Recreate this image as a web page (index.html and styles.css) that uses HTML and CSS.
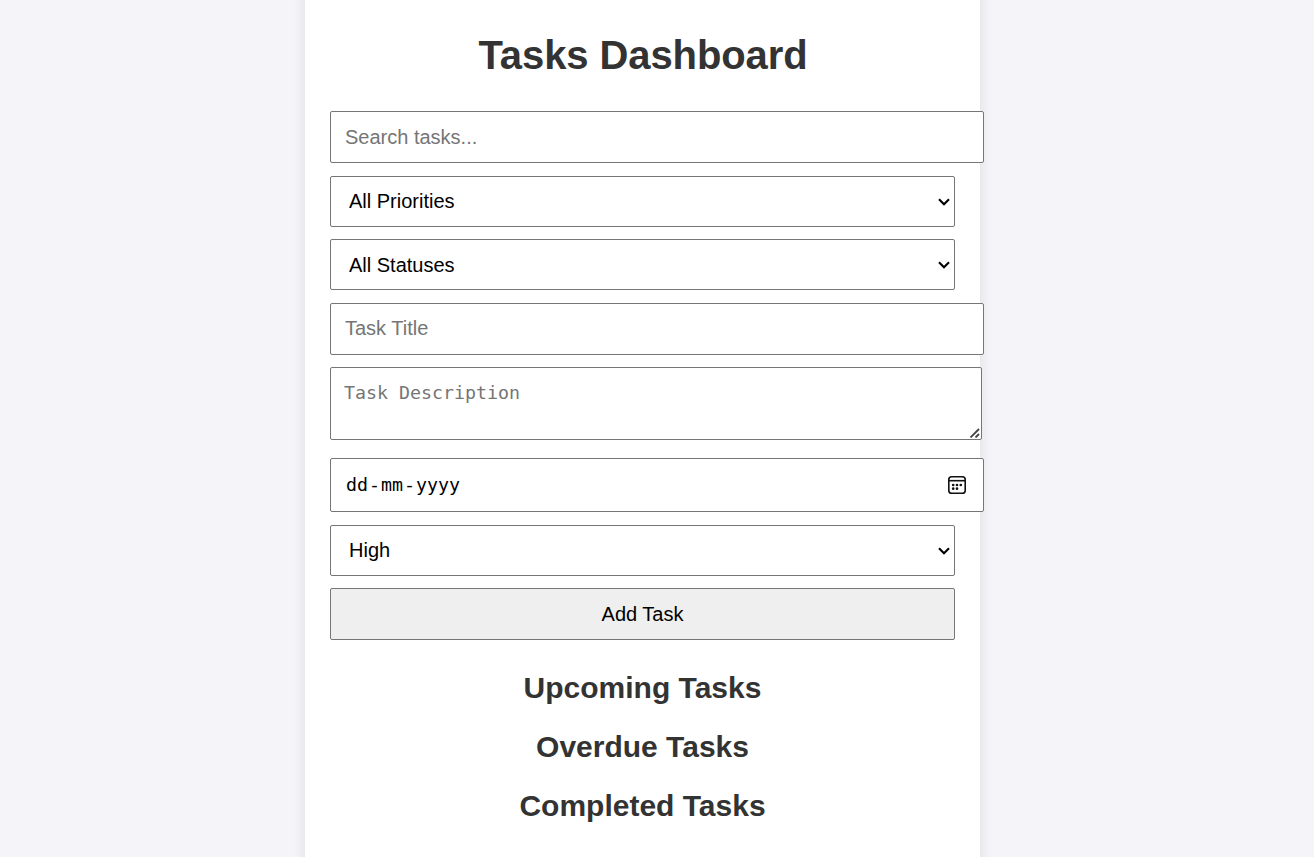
FILE: index.html
```html
<!DOCTYPE html>
<html lang="en">
<head>
<meta charset="utf-8">
<title>Tasks Dashboard</title>
<link rel="stylesheet" href="styles.css">
</head>
<body>
<main class="dashboard">
  <h1 class="title">Tasks Dashboard</h1>
  <form class="form">
    <input class="field text-input" type="text" placeholder="Search tasks...">
    <div class="select-wrap">
      <select class="field select raised"><option>All Priorities</option></select>
      <svg class="chevron" viewBox="0 0 12 8"><path d="M1 1.2 6 6.2 11 1.2"/></svg>
    </div>
    <div class="select-wrap">
      <select class="field select"><option>All Statuses</option></select>
      <svg class="chevron" viewBox="0 0 12 8"><path d="M1 1.2 6 6.2 11 1.2"/></svg>
    </div>
    <input class="field text-input task-title" type="text" placeholder="Task Title">
    <div class="description-wrap">
      <textarea class="field description" placeholder="Task Description"></textarea>
      <svg class="grip" viewBox="0 0 10 10"><path d="M.5 9.5 9 1M5.5 9.5 9 6"/></svg>
    </div>
    <div class="field date">
      <span class="date-text"><span class="part">dd</span>-<span class="part">mm</span>-<span class="part">yyyy</span></span>
      <svg class="calendar" viewBox="0 0 18 18">
        <rect x=".8" y=".8" width="16.4" height="16.4" rx="2.8"/>
        <path d="M1 4.7h16"/>
        <g class="dots"><circle cx="5.2" cy="9" r="1.35"/><circle cx="9" cy="9" r="1.35"/><circle cx="12.8" cy="9" r="1.35"/><circle cx="5.2" cy="12.7" r="1.35"/><circle cx="9" cy="12.7" r="1.35"/></g>
      </svg>
    </div>
    <div class="select-wrap">
      <select class="field select raised"><option>High</option></select>
      <svg class="chevron" viewBox="0 0 12 8"><path d="M1 1.2 6 6.2 11 1.2"/></svg>
    </div>
    <button class="field button" type="button">Add Task</button>
  </form>
  <h2 class="section">Upcoming Tasks</h2>
  <h2 class="section">Overdue Tasks</h2>
  <h2 class="section">Completed Tasks</h2>
</main>
</body>
</html>
```
FILE: styles.css
```css
* { box-sizing: border-box; }
html { height: 857px; overflow: hidden; background: #f4f4f9; }
body {
  margin: 0;
  font-family: "Liberation Sans", Arial, sans-serif;
}
.dashboard {
  width: 675px;
  height: 905px;
  margin: -20px 0 0 305px;
  padding: 52px 25px 0;
  background: #fff;
  box-shadow: 0 0 12.5px rgba(0, 0, 0, .1);
}
.title, .section {
  margin: 0;
  color: #333;
  text-align: center;
  font-weight: bold;
}
.title { font-size: 40px; line-height: 46px; letter-spacing: -.1px; padding-left: 1px; }
.section { font-size: 30px; line-height: 34px; margin-bottom: 25px; }
.form {
  display: flex;
  flex-direction: column;
  align-items: flex-start;
  margin: 33px 0 31px;
}
.field {
  display: block;
  margin: 0;
  border: 1px solid #767676;
  border-radius: 2px;
  background: #fff;
  color: #000;
  font: 20px "Liberation Sans", Arial, sans-serif;
}
.text-input { width: 654px; height: 52px; padding: 0 14px; margin-bottom: 13px; }
.task-title { margin: 1px 0 12px; padding-bottom: 2px; }
.field::placeholder { color: #757575; opacity: 1; }
.select-wrap { display: grid; align-items: center; width: 625px; margin-bottom: 12px; }
.select {
  grid-area: 1 / 1;
  width: 625px;
  height: 51px;
  padding: 0 18px;
  appearance: none;
}
.raised { padding-bottom: 2px; }
.chevron {
  grid-area: 1 / 1;
  justify-self: end;
  width: 12px;
  height: 8px;
  margin-right: 5px;
  fill: none;
  stroke: #000;
  stroke-width: 2.1;
  pointer-events: none;
}
.description-wrap { display: grid; width: 652px; margin-bottom: 18px; }
.description {
  grid-area: 1 / 1;
  width: 652px;
  height: 73px;
  padding: 13px;
  resize: none;
  font: 18.27px/23px "DejaVu Sans Mono", monospace;
}
.grip {
  grid-area: 1 / 1;
  place-self: end;
  width: 10px;
  height: 10px;
  margin: 0 2px 2px 0;
  stroke: #444;
  stroke-width: 1.8;
}
.date {
  display: flex;
  align-items: center;
  justify-content: space-between;
  width: 654px;
  height: 54px;
  padding: 0 17px 0 14px;
  margin-bottom: 13px;
  font: 18.27px/23px "DejaVu Sans Mono", monospace;
}
.date-text { padding-bottom: 2px; }
.part { padding: 0 1px; }
.calendar { width: 18px; height: 18px; fill: none; stroke: #111; stroke-width: 1.6; }
.dots { fill: #111; stroke: none; }
.button { width: 625px; height: 52px; background: #efefef; text-align: center; }
```
